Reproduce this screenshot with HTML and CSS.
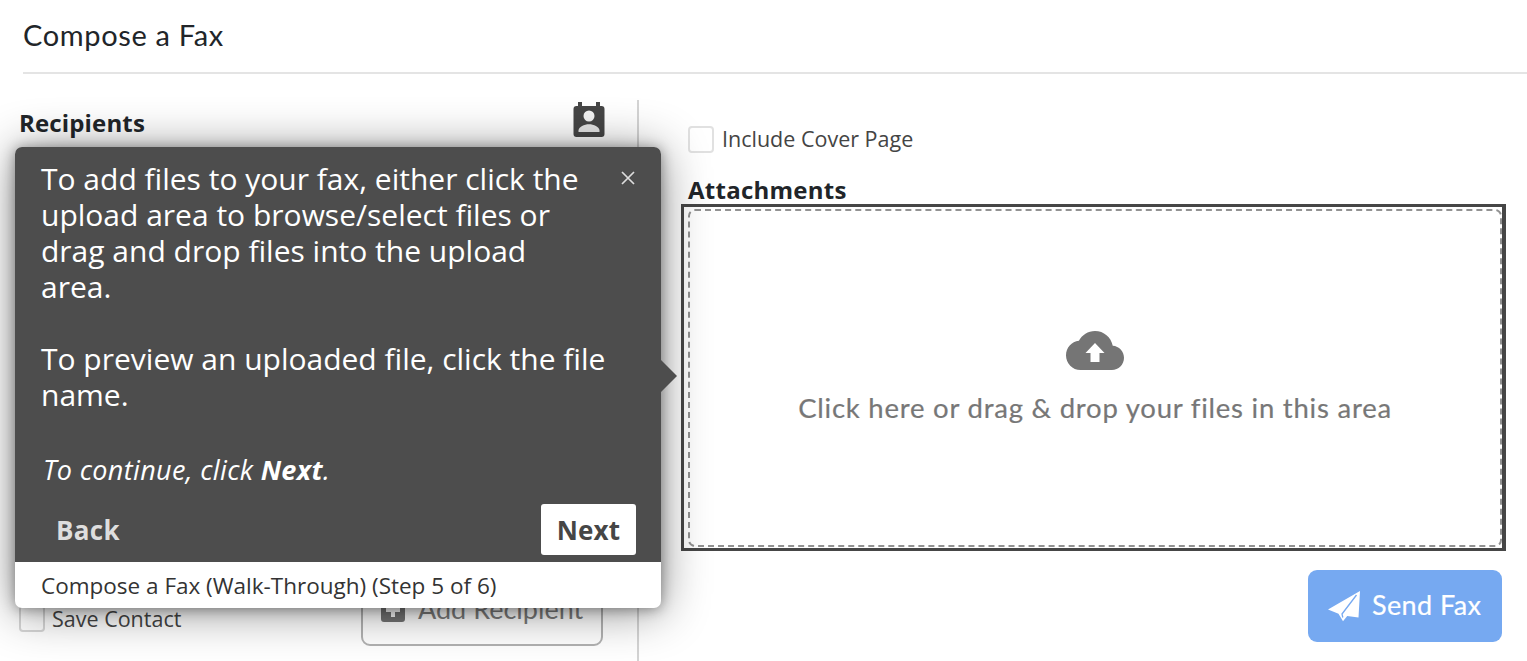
FILE: index.html
```
<!DOCTYPE html>
<html lang="en">
<head>
<meta charset="utf-8">
<title>Compose a Fax</title>
<link rel="stylesheet" href="styles.css">
</head>
<body>
<div class="page">
  <header class="page-header"><h1 class="title">Compose a Fax</h1></header>
  <main class="columns">
    <section class="recipients">
      <div class="recipients-head">
        <h2 class="heading heading-recipients">Recipients</h2>
        <svg class="contacts-icon" viewBox="0 0 32 35" aria-hidden="true">
          <path fill="#464646" d="M5 0h4v4h14V0h4v4h1.500a3 3 0 0 1 3 3v25a3 3 0 0 1-3 3h-25a3 3 0 0 1-3-3V7a3 3 0 0 1 3-3H5z"/>
          <circle cx="16" cy="14" r="5.500" fill="#f4f4f4"/>
          <path fill="#e6e6e6" d="M5.500 30v-1.500c0-3.500 6-6.200 10.500-6.200s10.500 2.700 10.500 6.200V30z"/>
        </svg>
      </div>
      <div class="recipient-actions">
        <label class="check"><span class="box"></span><span class="save-label">Save Contact</span></label>
        <div class="add-button">
          <svg class="plus-icon" viewBox="0 0 24 24" aria-hidden="true"><path fill="#747474" fill-rule="evenodd" d="M3 0h18a3 3 0 0 1 3 3v18a3 3 0 0 1-3 3H3a3 3 0 0 1-3-3V3a3 3 0 0 1 3-3zM10 5v5H5v4h5v5h4v-5h5v-4h-5V5z"/></svg>
          <span class="add-label">Add Recipient</span>
        </div>
      </div>
    </section>
    <section class="attachments">
      <label class="check cover"><span class="box"></span><span class="cover-label">Include Cover Page</span></label>
      <h2 class="heading heading-attachments">Attachments</h2>
      <div class="highlight">
        <div class="dropzone">
          <svg class="cloud-icon" viewBox="0 0 58 39" aria-hidden="true"><path fill="#757575" fill-rule="evenodd" d="M46.760 14.720C45.120 6.320 37.770 0 29 0 22 0 15.900 4 12.900 9.800 5.600 10.600 0 16.800 0 24.200 0 32.400 6.500 39 14.500 39h31.400C52.600 39 58 33.500 58 26.700c0-6.400-5-11.600-11.240-11.980zM33.500 22v9h-9v-9h-5L29 12l9.500 10z"/></svg>
          <span class="drop-label">Click here or drag &amp; drop your files in this area</span>
        </div>
      </div>
      <div class="send-row">
        <button class="send">
          <svg class="plane-icon" viewBox="0 0 32 30" aria-hidden="true"><path fill="#fff" d="M32 0 0 18.500l10.500 4.200L15 30.300l4.200-5.200L30.500 26.500z"/><path fill="none" stroke="#76a9f1" stroke-width="1.300" d="M28.500 4 14 23l.8 3.500"/></svg>
          <span class="send-label">Send Fax</span>
        </button>
      </div>
    </section>
  </main>
  <aside class="tour" role="dialog">
    <div class="tour-body">
      <svg class="close-icon" viewBox="0 0 14 14" aria-hidden="true"><path d="M1 1l12 12M13 1L1 13" stroke="#ddd" stroke-width="1.700"/></svg>
      <p class="line">To add files to your fax, either click the</p>
      <p class="line">upload area to browse/select files or</p>
      <p class="line">drag and drop files into the upload</p>
      <p class="line">area.</p>
      <p class="line gap">To preview an uploaded file, click the file</p>
      <p class="line">name.</p>
      <p class="line next-hint">To continue, click <strong>Next</strong>.</p>
      <div class="tour-nav"><span class="back">Back</span><button class="next">Next</button></div>
    </div>
    <div class="tour-foot"><span class="step">Compose a Fax (Walk-Through) (Step 5 of 6)</span></div>
  </aside>
</div>
</body>
</html>
```
FILE: styles.css
```
* { box-sizing: border-box; }
body { margin: 0; background: #fff; font-family: "Open Sans", sans-serif; color: #212529; overflow: hidden; }
h1, h2, p { margin: 0; }
svg { display: block; flex: none; }
button { border: 0; padding: 0; font-family: inherit; }
.page { position: relative; width: 1527px; height: 661px; overflow: hidden; display: flex; flex-direction: column; white-space: nowrap; }
.page-header { height: 74px; margin-left: 23px; border-bottom: 2px solid #e4e4e4; }
.title { font-family: Lato, sans-serif; font-weight: 400; font-size: 29px; line-height: 70px; letter-spacing: 0.65px; }
.columns { flex: 1; display: flex; padding-top: 26px; }
.recipients { width: 639px; border-right: 2px solid #d4d4d4; display: flex; flex-direction: column; justify-content: space-between; padding: 2px 34px 15px 19px; }
.recipients-head { display: flex; justify-content: space-between; }
.heading { font-size: 24px; font-weight: 700; line-height: 42px; letter-spacing: 0.15px; }
.contacts-icon { width: 32px; height: 35px; margin-right: -2px; }
.recipient-actions { display: flex; justify-content: space-between; align-items: flex-end; }
.check { display: flex; align-items: center; font-size: 21.5px; color: #444; }
.box { width: 26px; height: 27px; border: 2px solid #e1e1e1; border-radius: 4px; background: #fff; margin-right: 8px; }
.recipient-actions .check { margin-bottom: 13px; }
.recipient-actions .box { background: none; border-color: #d6d6d6; margin-right: 7px; }
.add-button { width: 242px; height: 72px; border: 2px solid #b2b2b2; border-radius: 9px; display: flex; align-items: center; padding-left: 18px; gap: 13px; color: #7c7c7c; font-family: Lato, sans-serif; font-size: 27px; }
.add-label { padding-bottom: 4px; }
.plus-icon { width: 24px; height: 24px; }
.attachments { flex: 1; padding: 26px 21px 0 42px; display: flex; flex-direction: column; }
.cover { margin-left: 7px; height: 27px; }
.cover-label { padding-bottom: 3px; }
.heading-attachments { margin: 16px 0 0 7px; height: 35px; line-height: 42px; letter-spacing: 0.25px; }
.highlight { width: 825px; height: 347px; border: 3px solid #464646; border-right-width: 4px; padding: 2px 0 2px 4px; }
.dropzone { height: 338px; border: 2px dashed #929292; border-radius: 7px; display: flex; flex-direction: column; align-items: center; padding-top: 120px; gap: 18px; }
.cloud-icon { width: 58px; height: 39px; }
.drop-label { font-family: Lato, sans-serif; font-size: 27.5px; line-height: 40px; letter-spacing: 0.77px; color: #777; -webkit-text-stroke: 0.2px #777; }
.send-row { display: flex; justify-content: flex-end; padding: 19px 4px 0 0; }
.send { width: 194px; height: 72px; border-radius: 9px; background: #76a9f1; color: #fff; display: flex; align-items: center; padding-left: 20px; gap: 12px; font-family: Lato, sans-serif; font-size: 27px; }
.send-label { padding-bottom: 3px; letter-spacing: 0.4px; -webkit-text-stroke: 0.2px #fff; }
.plane-icon { width: 32px; height: 30px; overflow: visible; }
.tour { position: absolute; left: 15px; top: 147px; width: 646px; height: 461px; border-radius: 7px; background: #fff; box-shadow: 0 3px 48px rgba(0,0,0,.46), 0 1px 13px rgba(0,0,0,.38); }
.tour::after { content: ""; position: absolute; left: 646px; top: 213px; border: 16px solid transparent; border-left-color: #4d4d4d; border-right: 0; }
.tour-body { height: 415px; background: #4d4d4d; border-radius: 7px 7px 0 0; padding: 14px 25px 0 26px; color: #fff; }
.close-icon { position: absolute; left: 606px; top: 24px; width: 14px; height: 14px; }
.line { font-size: 30px; line-height: 36px; height: 36px; }
.gap { margin-top: 36px; }
.next-hint { margin-top: 39px; padding-left: 2px; font-style: italic; font-size: 27px; letter-spacing: 0.35px; }
.tour-nav { display: flex; justify-content: space-between; align-items: center; margin-top: 16px; font-size: 26px; font-weight: 700; }
.back { padding-left: 15px; letter-spacing: 0.3px; color: #dedede; }
.next { width: 95px; height: 51px; border-radius: 3px; background: #fff; color: #464646; font-size: 26px; font-weight: 700; letter-spacing: 0.2px; }
.tour-foot { height: 46px; padding-left: 26px; line-height: 47px; font-size: 22.5px; color: #333; }
```
